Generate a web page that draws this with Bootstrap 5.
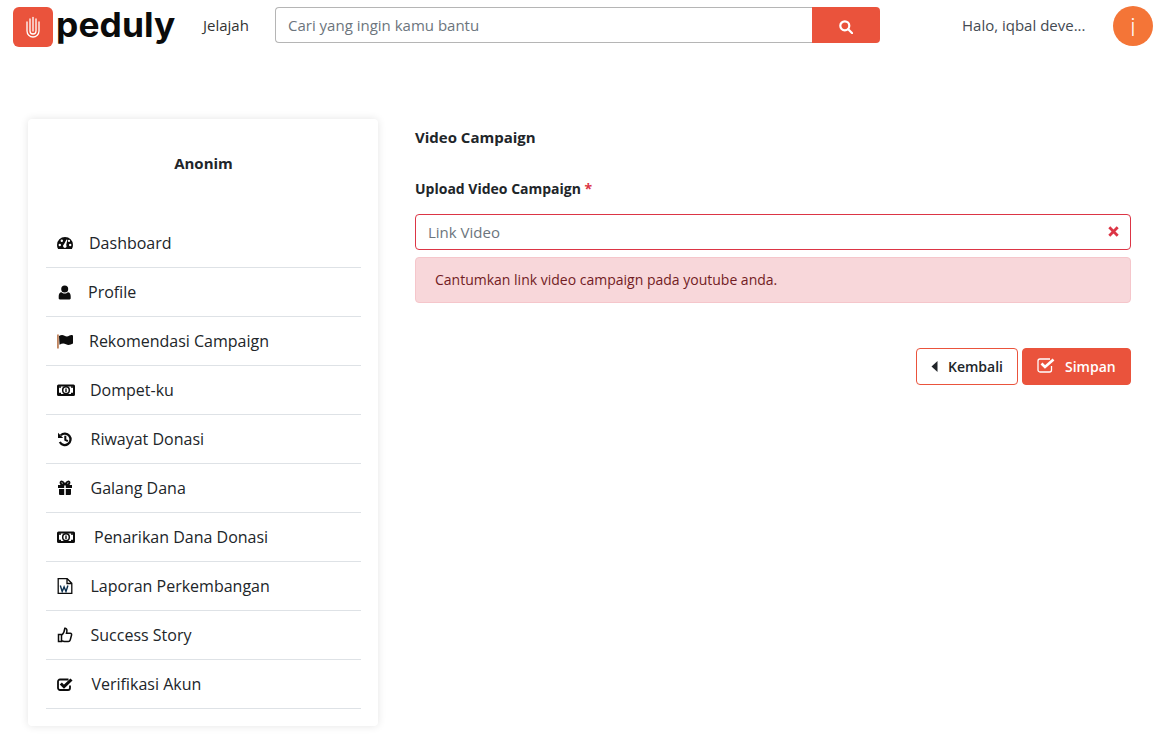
<!DOCTYPE html>
<html lang="id">
<head>
<meta charset="utf-8">
<title>Peduly</title>
<link rel="stylesheet" href="https://cdn.jsdelivr.net/npm/bootstrap@5.3.0/dist/css/bootstrap.min.css">
<style>
body{font-family:"Open Sans",sans-serif;color:#212529;background:#fff}
.top-bar{height:52px;padding:7px 14px 0 13px}
.logo-mark{width:40px;height:40px;background:#ea533c;border-radius:6px;flex:none}
.logo-word{font-family:"Inter",sans-serif;font-weight:700;font-size:34px;line-height:40px;letter-spacing:.1px;color:#0b0b0b;margin-left:3px;width:120px;margin-top:-2px;transform:scaleX(1.04);transform-origin:left center}
.explore{font-size:15px;color:#333;margin-left:27px;width:46px;line-height:36px}
.search-wrap{width:605px;height:36px;margin-left:26px}
.search-input{height:36px;font-size:15px;padding:0 12px;border:1px solid #b5b5b5;border-right:0;border-radius:4px 0 0 4px;flex:1;min-width:0}
.search-input::placeholder{color:#6c757d}
.search-btn{width:68px;height:36px;background:#ea533c;border:0;border-radius:0 4px 4px 0;padding:0}
.search-btn:hover{background:#ea533c}
.hello{font-size:15px;color:#444a52;margin-left:82px;width:151px;white-space:nowrap;line-height:36px}
.avatar{width:40px;height:40px;border-radius:50%;background:#f47537;color:#fff;font-size:26px;font-weight:300;line-height:40px;text-align:center;flex:none;margin-top:-1px}
.page-body{padding:67px 36px 11px 28px;gap:37px}
.side-card{width:350px;height:607px;border-radius:4px;box-shadow:0 0 8px rgba(0,0,0,.11);padding:0 17px 0 18px;flex:none}
.side-name{font-size:15px;font-weight:700;text-align:center;padding-top:34px;height:100px;line-height:20px;color:#212529}
.side-item{height:49px;border-bottom:1px solid #dee2e6;font-size:16px;color:#212529;padding:0 0 0 11px;line-height:48px}
.side-item svg{flex:none;width:16px;height:16px}
.side-item svg.wide-glyph{width:18px}
.lbl-15{margin-left:15px}
.lbl-16{margin-left:16px}
.lbl-17{margin-left:17.5px}
.lbl-18{margin-left:18.5px}
.lbl-19{margin-left:19px}
.main-pane{flex:1;min-width:0}
.pane-title{font-size:15px;font-weight:700;line-height:20px;margin:8px 0 32px}
.field-label{font-size:14px;font-weight:700;line-height:20px;margin-bottom:15px}
.req{color:#dc3545}
.video-input{height:36px;font-size:15px;border:1px solid #dc3545;border-radius:4px;padding:0 12px}
.video-input::placeholder{color:#6c757d}
.err-x{position:absolute;right:12px;top:12px;width:11px;height:11px}
.err-box{height:46px;margin:7px 0 0;padding:0 19px;font-size:14px;line-height:44px;background:#f8d7da;border:1px solid #f5c6cb;border-radius:4px;color:#721c24}
.act-row{margin-top:45px;gap:4px}
.act-back,.act-save{height:37px;font-size:14px;font-weight:600;border-radius:4px;display:flex;align-items:center;padding:0}
.act-back{width:102px;background:#fff;border:1px solid #ea533c;color:#212529;padding-left:14px;gap:10px}
.act-save{width:109px;background:#ea533c;border:1px solid #ea533c;color:#fff;padding-left:14px;gap:10px}
.act-save svg{margin-bottom:3px}
.act-back:hover{background:#fff;color:#212529;border-color:#ea533c}
.act-save:hover{background:#ea533c;color:#fff;border-color:#ea533c}
</style>
</head>
<body>
<header class="top-bar d-flex align-items-start">
  <div class="logo-mark d-flex align-items-center justify-content-center">
    <svg width="14" height="22" viewBox="0 0 14 22" fill="none" stroke="#fff" stroke-width="1.300" stroke-linecap="round"><path d="M1 6v9a6 6 0 0 0 12 0V6"/><path d="M4 3v12a3 3 0 0 0 6 0V3"/><path d="M7 1.500V15"/></svg>
  </div>
  <div class="logo-word">peduly</div>
  <a class="explore text-decoration-none" href="#">Jelajah</a>
  <form class="search-wrap d-flex">
    <input class="search-input form-control shadow-none" type="text" placeholder="Cari yang ingin kamu bantu">
    <button class="search-btn btn" type="button" aria-label="Cari">
      <svg width="14" height="14" viewBox="0 0 14 14" fill="none" stroke="#fff" stroke-width="2.200"><circle cx="5.800" cy="5.800" r="4.500"/><path d="M9.200 9.200l4 4" stroke-linecap="round"/></svg>
    </button>
  </form>
  <div class="hello">Halo, iqbal deve...</div>
  <div class="avatar">i</div>
</header>
<main class="page-body d-flex">
  <aside class="side-card bg-white">
    <div class="side-name">Anonim</div>
    <div class="side-item d-flex align-items-center">
      <svg viewBox="0 0 16 16" fill="#0c0c0c"><path fill-rule="evenodd" d="M8 2a8 8 0 0 0-8 8c0 1.500.4 2.900 1.100 4h13.800A8 8 0 0 0 16 10a8 8 0 0 0-8-8zM2.800 11.200a1.200 1.200 0 1 1 0-2.400 1.200 1.200 0 0 1 0 2.400zM4.800 7a1.200 1.200 0 1 1 0-2.400 1.200 1.200 0 0 1 0 2.400zM8 13a2 2 0 0 1-1-3.700L9.500 4.500l.9.300-1.200 5.300A2 2 0 0 1 8 13zM13.200 11.200a1.200 1.200 0 1 1 0-2.400 1.200 1.200 0 0 1 0 2.400zM12 7a1.100 1.100 0 1 1 0-2.200A1.100 1.100 0 0 1 12 7z"/></svg>
      <span class="lbl-16">Dashboard</span>
    </div>
    <div class="side-item d-flex align-items-center">
      <svg viewBox="0 0 16 16" fill="#0c0c0c"><circle cx="7.700" cy="5" r="3.500"/><path d="M2.800 15.400c-.7 0-1.100-.5-1.100-1.200v-2c0-2 .9-4 2.800-4 .9.800 2 1.300 3.200 1.300s2.300-.5 3.200-1.300c1.900 0 2.800 2 2.800 4v2c0 .7-.4 1.200-1.100 1.200z"/></svg>
      <span class="lbl-15">Profile</span>
    </div>
    <div class="side-item d-flex align-items-center">
      <svg viewBox="0 0 16 16" fill="#0c0c0c"><rect x="0.300" y="1.500" width="1.300" height="14" fill="#a5521d"/><path d="M2 3c2-1.300 3.800-1.300 5.500-.3s3.200 1 5-.2c1.500-.9 3.500-.6 3.500.5v7.500c-2.500 1.500-5 1.800-7 .8s-4-1-6.500.5z"/></svg>
      <span class="lbl-16">Rekomendasi Campaign</span>
    </div>
    <div class="side-item d-flex align-items-center">
      <svg class="wide-glyph" viewBox="0 0 18 16" fill="none" stroke="#0c0c0c"><rect x="1" y="3.500" width="16" height="9.500" rx=".5" stroke-width="2"/><path d="M2 5h2M14 5h2M2 11.500h2M14 11.500h2" stroke-width="1.500"/><ellipse cx="9" cy="8.200" rx="3.300" ry="3.400" stroke-width="1.500"/><path d="M9 6.500v3.600" stroke-width="1.400"/></svg>
      <span class="lbl-15">Dompet-ku</span>
    </div>
    <div class="side-item d-flex align-items-center">
      <svg viewBox="0 0 16 16" fill="none" stroke="#0c0c0c" stroke-width="2.300"><path d="M3.800 4.300A5.700 5.700 0 1 1 2.800 11"/><path d="M8.300 4.800v4l2.600 1.300" stroke-width="2"/><path d="M1 1.800v5.200h5.200z" fill="#0c0c0c" stroke="none"/></svg>
      <span class="lbl-17">Riwayat Donasi</span>
    </div>
    <div class="side-item d-flex align-items-center">
      <svg viewBox="0 0 16 16" fill="#0c0c0c"><path d="M1 5h6.200v3H1zM8.800 5H15v3H8.800zM2 9h5.200v6H3a1 1 0 0 1-1-1zM8.800 9H14v5a1 1 0 0 1-1 1H8.800z"/><path d="M8 4.500C6.500 2 5.200 1 4.200 1.500S3.300 4 5 4.500zM8 4.500c1.500-2.500 2.800-3.500 3.800-3S12.700 4 11 4.500z" fill="none" stroke="#0c0c0c" stroke-width="1.900"/></svg>
      <span class="lbl-17">Galang Dana</span>
    </div>
    <div class="side-item d-flex align-items-center">
      <svg class="wide-glyph" viewBox="0 0 18 16" fill="none" stroke="#0c0c0c"><rect x="1" y="3.500" width="16" height="9.500" rx=".5" stroke-width="2"/><path d="M2 5h2M14 5h2M2 11.500h2M14 11.500h2" stroke-width="1.500"/><ellipse cx="9" cy="8.200" rx="3.300" ry="3.400" stroke-width="1.500"/><path d="M9 6.500v3.600" stroke-width="1.400"/></svg>
      <span class="lbl-19">Penarikan Dana Donasi</span>
    </div>
    <div class="side-item d-flex align-items-center">
      <svg viewBox="0 0 16 16" fill="none" stroke="#0c0c0c" stroke-width="1.300"><path d="M1.200.7h9l4.600 4.600v10H1.200zM10 .7v4.800h4.800"/><path d="M3.300 7.500l1.900 6 1.900-4.600L9 13.500l1.900-6" stroke="#0a2f4f" stroke-width="1.400"/></svg>
      <span class="lbl-17">Laporan Perkembangan</span>
    </div>
    <div class="side-item d-flex align-items-center">
      <svg viewBox="0 0 16 16" fill="none" stroke="#0c0c0c" stroke-width="1.500"><path d="M1.500 7.500h3v7h-3zM4.500 8.500C6.300 7 7.500 4.500 7.800 1.300c1.700-.5 2.700 1.500 1.700 5h3.800c1.100 0 1.500 1 1.200 2l-1.300 4.700c-.3 1-.9 1.500-1.800 1.500H7.200c-1.100 0-1.800-.5-2.700-1"/></svg>
      <span class="lbl-17">Success Story</span>
    </div>
    <div class="side-item d-flex align-items-center">
      <svg viewBox="0 0 16 16" fill="none" stroke="#0c0c0c" stroke-width="1.800"><path d="M13 9.500v2.500a2 2 0 0 1-2 2H3a2 2 0 0 1-2-2V5.500a2 2 0 0 1 2-2h8.500"/><path d="M3.800 7.500l3.200 3.200L14.500 3.500" stroke-width="3"/></svg>
      <span class="lbl-18">Verifikasi Akun</span>
    </div>
  </aside>
  <section class="main-pane">
    <div class="pane-title">Video Campaign</div>
    <div class="field-label">Upload Video Campaign <span class="req">*</span></div>
    <div class="position-relative">
      <input class="video-input form-control shadow-none" type="text" placeholder="Link Video">
      <svg class="err-x" viewBox="0 0 11 11" stroke="#dc3545" stroke-width="2.800" fill="none"><path d="M1.300 1.300l8.400 8.400M9.700 1.300l-8.400 8.400"/></svg>
    </div>
    <div class="err-box">Cantumkan link video campaign pada youtube anda.</div>
    <div class="act-row d-flex justify-content-end">
      <button class="act-back btn" type="button"><svg width="7" height="12" viewBox="0 0 7 12" fill="#212529"><path d="M6.500 0v11L.5 5.500z"/></svg>Kembali</button>
      <button class="act-save btn" type="button"><svg width="18" height="15" viewBox="0 0 18 15" fill="none" stroke="#fff" stroke-width="1.300"><path d="M14.500 8v4a2 2 0 0 1-2 2H3a2 2 0 0 1-2-2V3a2 2 0 0 1 2-2h10"/><path d="M4.500 5.500l3.500 3.500L16.500 1.500" stroke-width="2.700"/></svg>Simpan</button>
    </div>
  </section>
</main>
</body>
</html>
